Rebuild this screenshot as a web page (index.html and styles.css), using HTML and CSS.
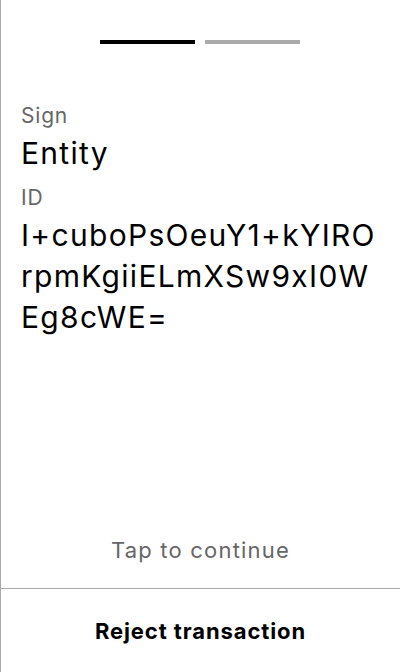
FILE: index.html
```html
<!DOCTYPE html>
<html>
<head>
<meta charset="utf-8">
<link rel="stylesheet" href="styles.css">
</head>
<body>
<div class="screen">
  <div class="progress">
    <span class="bar active"></span>
    <span class="bar"></span>
  </div>
  <div class="content">
    <div class="label">Sign</div>
    <div class="value">Entity</div>
    <div class="label">ID</div>
    <div class="value id">I+cuboPsOeuY1+kYIROrpmKgiiELmXSw9xI0WEg8cWE=</div>
  </div>
  <div class="tap">Tap to continue</div>
  <div class="footer">Reject transaction</div>
</div>
</body>
</html>
```
FILE: styles.css
```css
html, body {
  margin: 0;
  padding: 0;
  background: #fff;
}
.screen {
  box-sizing: border-box;
  height: 672px;
  width: 400px;
  border-left: 1px solid #aaa;
  display: flex;
  flex-direction: column;
  font-family: Inter, "Noto Sans", sans-serif;
  color: #000;
}
.progress {
  display: flex;
  justify-content: center;
  gap: 10px;
  padding-top: 40px;
  margin-left: -1px;
}
.bar {
  width: 95px;
  height: 4px;
  background: #aaa;
}
.bar.active {
  background: #000;
}
.content {
  padding: 60px 19px 0 20px;
  flex: 1;
}
.label {
  font-size: 21px;
  line-height: 24px;
  letter-spacing: 0.8px;
  color: #666;
  margin-bottom: 5px;
}
.value {
  font-size: 30px;
  line-height: 41px;
  letter-spacing: 1.3px;
  margin-bottom: 12px;
}
.id {
  word-break: break-all;
}
.tap {
  text-align: center;
  font-size: 22px;
  letter-spacing: 1.2px;
  color: #666;
  line-height: 28px;
  padding-bottom: 24px;
}
.footer {
  border-top: 1px solid #aaa;
  height: 83px;
  display: flex;
  align-items: center;
  justify-content: center;
  font-size: 22px;
  letter-spacing: 0.9px;
  font-weight: 700;
}
```
